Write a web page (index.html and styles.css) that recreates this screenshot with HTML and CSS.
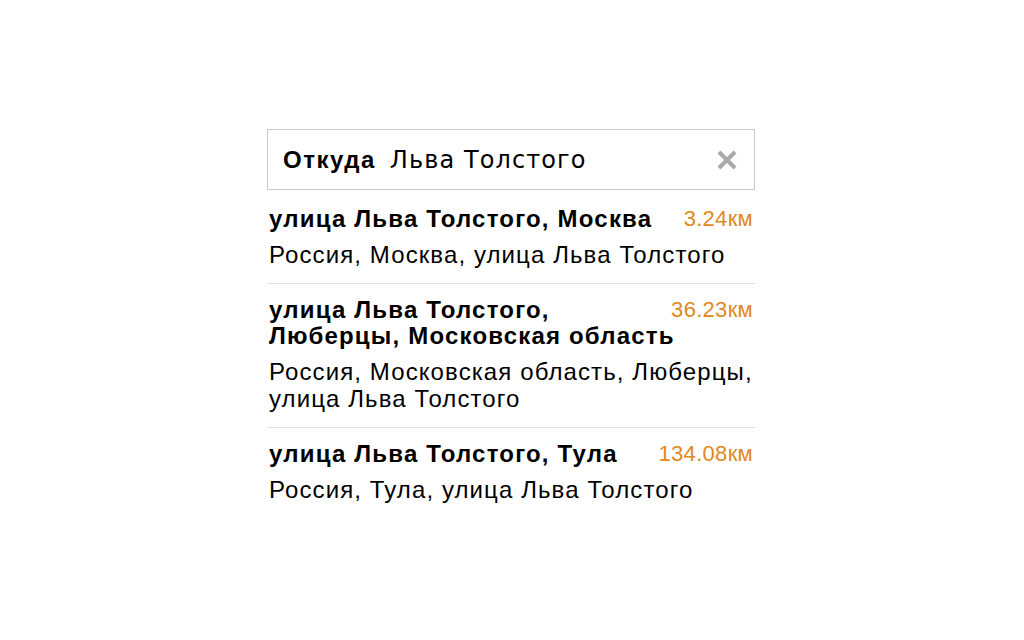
FILE: index.html
```html
<!DOCTYPE html>
<html lang="ru">
<head>
<meta charset="utf-8">
<link rel="stylesheet" href="styles.css">
</head>
<body>
<div class="suggest">
  <div class="field">
    <span class="field-label">Откуда</span>
    <span class="field-value">Льва Толстого</span>
    <span class="field-clear">
      <svg width="22" height="22" viewBox="0 0 22 22"><path d="M3 3 L19 19 M19 3 L3 19" stroke="#aaaaaa" stroke-width="4.2" stroke-linecap="butt"/></svg>
    </span>
  </div>
  <ul class="results">
    <li class="item">
      <div class="item-title"><span class="item-dist">3.24км</span>улица Льва Толстого, Москва</div>
      <div class="item-sub">Россия, Москва, улица Льва Толстого</div>
    </li>
    <li class="item">
      <div class="item-title"><span class="item-dist">36.23км</span>улица Льва Толстого, Люберцы, Московская область</div>
      <div class="item-sub">Россия, Московская область, Люберцы, улица Льва Толстого</div>
    </li>
    <li class="item last">
      <div class="item-title"><span class="item-dist">134.08км</span>улица Льва Толстого, Тула</div>
      <div class="item-sub">Россия, Тула, улица Льва Толстого</div>
    </li>
  </ul>
</div>
</body>
</html>
```
FILE: styles.css
```css
html, body {
  margin: 0;
  padding: 0;
  background: #ffffff;
}
body {
  width: 1024px;
  height: 640px;
  font-family: "Liberation Sans", Arial, sans-serif;
  color: #000;
}
.suggest {
  width: 488px;
  margin: 129px 0 0 267px;
}
.field {
  box-sizing: border-box;
  height: 61px;
  border: 1px solid #c8c8c8;
  display: flex;
  align-items: center;
  padding: 1px 16px 0 15px;
}
.field-label {
  font-weight: bold;
  font-size: 24px;
  letter-spacing: 1.5px;
  margin-right: 14px;
}
.field-value {
  font-family: "DejaVu Sans", sans-serif;
  font-size: 24px;
  letter-spacing: 1.1px;
  flex: 1;
}
.field-clear {
  display: flex;
  width: 22px;
  height: 22px;
}
.results {
  list-style: none;
  margin: 3px 0 0 0;
  padding: 0;
}
.item {
  padding: 13px 0 15px 2px;
  border-bottom: 1px solid #e2e2e2;
}
.item.last {
  border-bottom: none;
}
.item-title {
  font-weight: bold;
  font-size: 24px;
  letter-spacing: 1.2px;
  line-height: 26px;
}
.item-dist {
  float: right;
  font-weight: normal;
  font-size: 22px;
  letter-spacing: 0.3px;
  line-height: 26px;
  color: #e0891c;
  margin: 0 2px 0 24px;
}
.item-sub {
  font-size: 24px;
  letter-spacing: 1.1px;
  line-height: 27px;
  margin-top: 9px;
}
```
